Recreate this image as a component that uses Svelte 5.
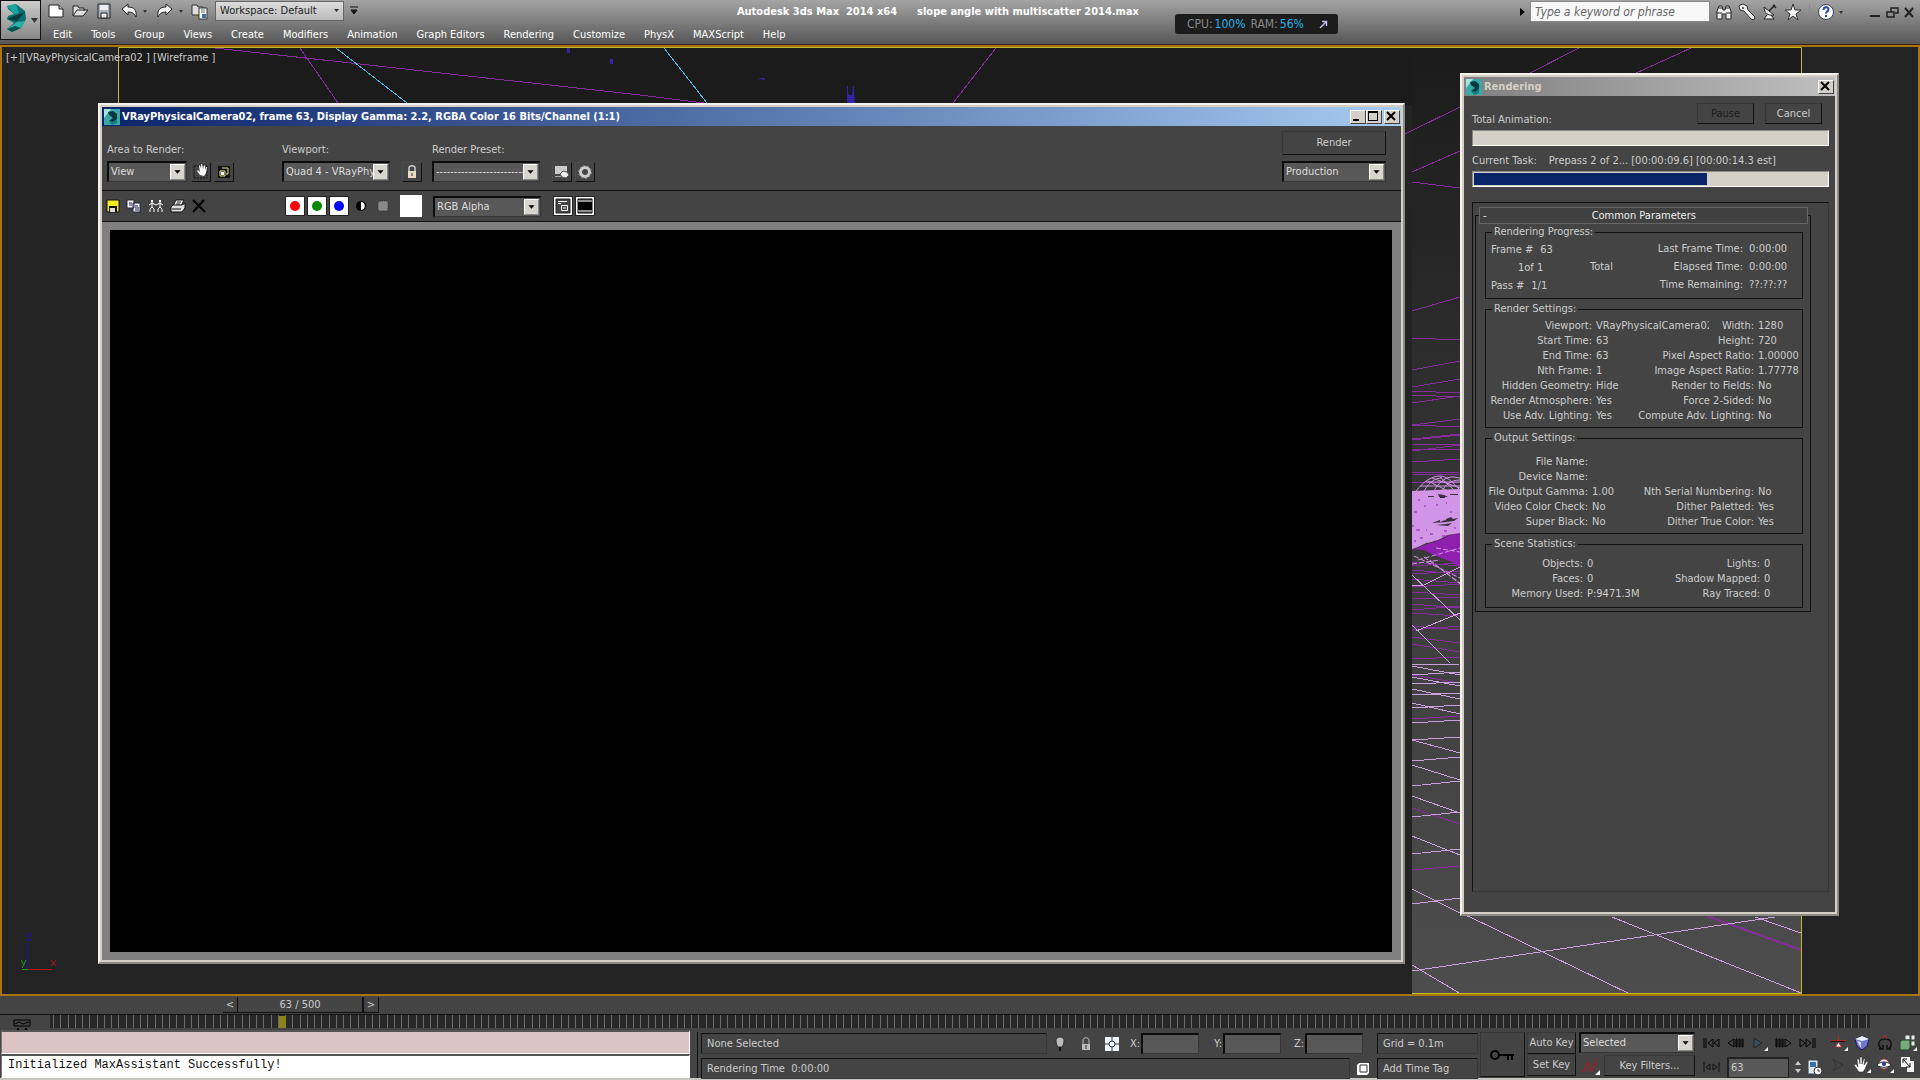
<script lang="ts">
    const menus = ['Edit', 'Tools', 'Group', 'Views', 'Create', 'Modifiers', 'Animation', 'Graph Editors', 'Rendering', 'Customize', 'PhysX', 'MAXScript', 'Help'];

    let frame = 63;
    const frameCount = 500;
    const ticks = Array(frameCount / 2 + 1);
    let taskProgress = 66;

    const progress = [
        ['Last Frame Time:', '0:00:00'],
        ['Elapsed Time:', '0:00:00'],
        ['Time Remaining:', '??:??:??']
    ];

    const groups = [
        {
            name: 'Render Settings:',
            kind: 'settings',
            rows: [
                ['Viewport:', 'VRayPhysicalCamera02', 'Width:', '1280'],
                ['Start Time:', '63', 'Height:', '720'],
                ['End Time:', '63', 'Pixel Aspect Ratio:', '1.00000'],
                ['Nth Frame:', '1', 'Image Aspect Ratio:', '1.77778'],
                ['Hidden Geometry:', 'Hide', 'Render to Fields:', 'No'],
                ['Render Atmosphere:', 'Yes', 'Force 2-Sided:', 'No'],
                ['Use Adv. Lighting:', 'Yes', 'Compute Adv. Lighting:', 'No']
            ]
        },
        {
            name: 'Output Settings:',
            kind: 'output',
            rows: [
                ['File Name:', '', '', ''],
                ['Device Name:', '', '', ''],
                ['File Output Gamma:', '1.00', 'Nth Serial Numbering:', 'No'],
                ['Video Color Check:', 'No', 'Dither Paletted:', 'Yes'],
                ['Super Black:', 'No', 'Dither True Color:', 'Yes']
            ]
        },
        {
            name: 'Scene Statistics:',
            kind: 'stats',
            rows: [
                ['Objects:', '0', 'Lights:', '0'],
                ['Faces:', '0', 'Shadow Mapped:', '0'],
                ['Memory Used:', 'P:9471.3M', 'Ray Traced:', '0']
            ]
        }
    ];

    // wireframe segments between the two windows: [y at left edge, y at right edge]
    const farLines = [
        [311, 297], [338, 340], [370, 361], [387, 379], [391, 393], [395, 397], [403, 396], [425, 419], [425, 427],
        [439, 434], [440, 435], [444, 445], [449, 450], [451, 445], [462, 459], [473, 472], [474, 475], [483, 482],
        [562, 566], [566, 563], [570, 574], [574, 571], [579, 583], [587, 584], [592, 595], [599, 597], [604, 608],
        [610, 606], [613, 616], [626, 630], [630, 626], [637, 643], [644, 652], [659, 657], [675, 683], [719, 716],
        [808, 824], [870, 866]
    ];
    const nearLines = [
        [665, 664], [666, 675], [675, 672], [677, 686], [684, 682], [689, 699], [695, 693], [703, 714], [708, 705],
        [723, 720], [740, 753], [740, 737], [761, 757], [765, 780], [786, 781], [796, 813], [817, 812], [836, 855],
        [854, 849], [904, 898]
    ];
</script>

{#snippet appIcon()}
    <svg class="app-icon" width="16" height="16" viewBox="0 0 16 16">
        <rect width="16" height="16" fill="#39a8a6" />
        <path d="M0 0h7L0 9z" fill="#a9e4df" />
        <path d="M4 3l5-1 4 3v5l-4 3-4-1 4-3-4-3z" fill="#06393f" />
        <path d="M5 12l4 1 4-3v4l-5 2z" fill="#0f7f80" />
    </svg>
{/snippet}

{#snippet combo(id: string, value: string, cls: string)}
    <span class="combo {cls}">
        <select {id} aria-label={id}><option>{value}</option></select>
        <svg class="drop" width="15" height="16" viewBox="0 0 15 16"><path d="M4 6h7L7.500 10z" fill="#000" /></svg>
    </span>
{/snippet}

<div class="app">
    <header>
        <button class="logo" aria-label="Application menu">
            <svg width="38" height="38" viewBox="0 0 38 38">
                <path d="M6 5l9-2 9 7 1 8-5 9-9 4-5-3 7-6-7-4 1-3 6-2-6-5z" fill="#08706f" />
                <path d="M6 5l9-2 3 9-5 1z" fill="#1da39d" />
                <path d="M6 18l7-3 11-4-8 9z" fill="#043c40" />
                <path d="M6 28l10-7 8-1-4 7-9 4z" fill="#2ab0a8" />
                <path d="M6 28l8-3 6 2-9 4z" fill="#075052" />
                <path d="M30 17h7l-3.500 5z" fill="#333" />
            </svg>
        </button>
        <div class="bars">
            <div class="quick">
                <button aria-label="New"><svg width="18" height="16" viewBox="0 0 18 16"><path d="M2 2h10l4 4v8H2z" fill="#fff" stroke="#222" /><path d="M12 2v4h4" fill="#bbb" stroke="#222" /></svg></button>
                <button aria-label="Open"><svg width="18" height="16" viewBox="0 0 18 16"><path d="M2 13V3h5l1 2h5v3M2 13l4-6h11l-5 6z" fill="#ddd" stroke="#222" /></svg></button>
                <button aria-label="Save"><svg width="18" height="16" viewBox="0 0 18 16"><path d="M3 1h12v14H3z" fill="#a8b2bc" stroke="#222" /><path d="M5 2h8v5H5z" fill="#eee" /><path d="M6 10h6v5H6z" fill="#eee" stroke="#222" /></svg></button>
                <button class="pair" aria-label="Undo"><svg width="26" height="16" viewBox="0 0 26 16"><path d="M1 6l6-5v3c6 0 9 3 8 10-2-4-4-5-8-5v3z" fill="#f4f4f4" stroke="#222" /><path d="M22 7h4l-2 3z" fill="#333" /></svg></button>
                <button class="pair" aria-label="Redo"><svg width="26" height="16" viewBox="0 0 26 16"><path d="M15 6L9 1v3C3 4 0 7 1 14c2-4 4-5 8-5v3z" fill="#f4f4f4" stroke="#222" /><path d="M22 7h4l-2 3z" fill="#333" /></svg></button>
                <button aria-label="Project folder"><svg width="18" height="18" viewBox="0 0 18 18"><path d="M1 3h5l1 2h5v8H1z" fill="#ddd" stroke="#333" /><path d="M8 6h8v11H8z" fill="#fff" stroke="#333" /><path d="M10 8h4M10 10h4" stroke="#666" /><path d="M11 12h4v4h-4z" fill="#3c6f9f" /></svg></button>
                <span class="workspace">
                    <select aria-label="Workspace"><option>Workspace: Default</option></select>
                    <svg width="5" height="4" viewBox="0 0 5 4"><path d="M0 0h5L2.500 3z" fill="#333" /></svg>
                </span>
                <svg width="8" height="10" viewBox="0 0 8 10"><path d="M0 1h8M1 4h6L4 8z" fill="#111" stroke="#111" /></svg>
            </div>
            <nav>
                {#each menus as menu}
                    <button>{menu}</button>
                {/each}
            </nav>
        </div>
        <div class="title"><span>Autodesk 3ds Max&nbsp; 2014 x64</span><span>slope angle with multiscatter 2014.max</span></div>
        <div class="meter">
            <span>CPU:</span><b>100%</b><span class="ram">RAM:</span><b>56%</b>
            <svg width="9" height="9" viewBox="0 0 9 9"><path d="M1 8l6-6M3 1.500h4.500V6" fill="none" stroke="#b8b8ee" stroke-width="1.500" /></svg>
        </div>
        <div class="info">
            <svg width="5" height="8" viewBox="0 0 5 8"><path d="M0 0l5 4-5 4z" fill="#000" /></svg>
            <input type="text" placeholder="Type a keyword or phrase" aria-label="Search" />
            <button aria-label="Find"><svg width="18" height="18" viewBox="0 0 18 18"><path d="M2 16V8l2-5h3l1 4h2l1-4h3l2 5v8h-5v-5H7v5z" fill="#eee" stroke="#222" /><path d="M2 10h5M11 10h5M4 5h3M11 5h3" stroke="#222" /></svg></button>
            <button aria-label="Subscription"><svg width="18" height="18" viewBox="0 0 18 18"><path d="M2 2l3-1 4 2 1 4 7 7-1 3-3-1-7-8-4-1-1-4z" fill="#eee" stroke="#333" /><circle cx="5" cy="5" r="1" fill="#333" /></svg></button>
            <button aria-label="Communication"><svg width="18" height="18" viewBox="0 0 18 18"><path d="M3 4c0 6 4 9 10 8zM6 12l-3 4h10l-3-4" fill="#eee" stroke="#222" /><path d="M8 8l6-6M12 2l3 3" stroke="#222" stroke-width="1.500" /></svg></button>
            <button aria-label="Favorites"><svg width="18" height="18" viewBox="0 0 18 18"><path d="M9 1l2 6h6l-5 4 2 6-5-4-5 4 2-6-5-4h6z" fill="#f4f4f4" stroke="#333" /></svg></button>
            <i class="rule"></i>
            <button class="help" aria-label="Help"><svg width="26" height="18" viewBox="0 0 26 18"><circle cx="9" cy="9" r="7.500" fill="#fff" stroke="#345" /><path d="M6.500 7c0-3.500 5-3.500 5-.5 0 2-2.500 2-2.500 4M9 12v2" fill="none" stroke="#2548a8" stroke-width="2" /><path d="M22 8h4l-2 3z" fill="#333" /></svg></button>
            <button class="min" aria-label="Minimize"><svg width="12" height="16" viewBox="0 0 12 16"><path d="M1 12h10" stroke="#222" stroke-width="2" /></svg></button>
            <button aria-label="Restore"><svg width="13" height="16" viewBox="0 0 13 16"><path d="M5 8V4h7v5H9M1 8h7v5H1z" fill="none" stroke="#222" stroke-width="1.500" /></svg></button>
            <button aria-label="Close"><svg width="11" height="16" viewBox="0 0 11 16"><path d="M1 4l8 9M9 4l-8 9" stroke="#222" stroke-width="2" /></svg></button>
        </div>
    </header>

    <main>
        <svg class="scene" viewBox="2 47 1916 947" preserveAspectRatio="none">
            <defs>
                <linearGradient id="ground" x1="0" y1="0" x2="0" y2="1">
                    <stop offset="0" stop-color="#1b1b1b" />
                    <stop offset=".25" stop-color="#282828" />
                    <stop offset=".63" stop-color="#404040" />
                    <stop offset="1" stop-color="#4d4d4d" />
                </linearGradient>
            </defs>
            <rect x="118" y="47" width="1300" height="58" fill="#1b1b1b" />
            <rect x="1412" y="47" width="390" height="947" fill="url(#ground)" />
            <g fill="none" stroke="#862c9c" shape-rendering="crispEdges">
                <path d="M215 48L640 95l64 8M300 48l38 55M996 48l-43 55M1579 48l-51 26M1691 48l-57 26M1405 134l55-27M1412 172l48-21M1412 182l48 6" />
                {#each farLines as [a, b]}
                    <path d="M1412 {a}L1460 {b}" />
                {/each}
                <path d="M1707 916l94 34" stroke-width="2" />
            </g>
            <path d="M336 48l71 55M664 48l43 55" fill="none" stroke="#4fb4e0" shape-rendering="crispEdges" />
            <path d="M567 48h3v5h-3zM610 59h3v5h-3zM758 80l3-2h3l1 2h-2l-1-1zM847 86h1v6l1 3h3l1-9h1v4l1 14h-8z" fill="#3324a4" />
            <path d="M1412 550l10-4 12-4 26-10v36l-8-6-16-6-12-6-12-1z" fill="#8f1fae" />
            <path d="M1412 491l48-2v44l-12 2-10 5-12 3-8 4-6 2z" fill="#d294e6" />
            <path d="M1416 491c8-10 16-15 24-15s14 8 20 14M1424 491c6-10 12-13 18-13M1434 491c4-8 12-15 20-14l6 1M1442 491c3-6 9-11 18-11M1420 486h40M1426 482h34M1432 478l28 10M1440 477l14 13M1428 481l20 10" fill="none" stroke="#d294e6" />
            <path d="M1428 496h6v1h-6zM1438 494l6 1 4 2h-9zM1432 523l8-3v2l5-2 3 2zM1446 519l5-2 2 2 5-1-4 3-8 1zM1450 494h8v1h-8zM1440 497h5v1h-5zM1436 525l10-1 6-1-4 3z" fill="#3a3040" />
            <path d="M1414 545l20-4M1418 560l42-12M1414 556l46 22M1424 557l36 26M1412 564l28-4M1430 560l30 24M1436 548l24 4" fill="none" stroke="#d294e6" stroke-dasharray="5 2" />
            <path d="M1418 500h2M1424 506h2M1414 512h3M1450 512h2M1430 534h3M1442 536h8M1416 530h4M1436 505h2M1412 526h2M1420 538h3M1414 541h2M1426 530h1M1454 528h2M1444 531h3M1446 503h1" stroke="#8f1fae" />
            <g fill="none" stroke="#c9a0dc" shape-rendering="crispEdges">
                {#each nearLines as [a, b]}
                    <path d="M1412 {a}L1460 {b}" />
                {/each}
                <path d="M1412 575l48 45M1412 585h12l36-18M1412 625l38 38M1416 631l44-18" />
                <path d="M1412 889l48 24 10 4 160 77M1412 971l363-54M1412 965l49 29M1612 917l189 76M1755 917l46 16" />
            </g>
            <path d="M118.500 105V47.500H1801.500V993.500H1412" fill="none" stroke="#c4bc1e" />
            <g fill="none" stroke-width="1">
                <path d="M27.500 969v-26M26 934h5l-4 6h5" stroke="#1a10b0" />
                <path d="M28 969.500h24M51 960l5 6M56 960l-5 6" stroke="#b01818" />
                <path d="M22 969.500h6M21 960l3 5M26 960l-4 8" stroke="#18a018" />
            </g>
        </svg>
        <div class="view-label">[+][VRayPhysicalCamera02 ] [Wireframe ]</div>

        <section class="window frame-window">
            <div class="caption">
                {@render appIcon()}
                <h2>VRayPhysicalCamera02, frame 63, Display Gamma: 2.2, RGBA Color 16 Bits/Channel (1:1)</h2>
                <button class="sys" aria-label="Minimize window"><svg width="12" height="11" viewBox="0 0 12 11"><path d="M2 8h6v2H2z" /></svg></button>
                <button class="sys" aria-label="Maximize window"><svg width="12" height="11" viewBox="0 0 12 11"><path d="M1 0h10v10H1zM2 2v7h8V2z" fill-rule="evenodd" /></svg></button>
                <button class="sys close" aria-label="Close window"><svg width="12" height="11" viewBox="0 0 12 11"><path d="M2 1l8 8M10 1L2 9" stroke="#000" stroke-width="2" /></svg></button>
            </div>
            <div class="render-bar">
                <div class="field area">
                    <label for="area">Area to Render:</label>
                    <div class="line">
                        {@render combo('area', 'View', 'w80')}
                        <button class="tool" aria-label="Edit region"><svg width="18" height="18" viewBox="0 0 18 18"><path d="M2 3h13v12H2z" fill="none" stroke="#111" stroke-dasharray="2 1" /><path d="M8 12L5 8l1-1 2 2-1-6 1-1 1 4V1h1l1 5 1-4 1 1v4l1-3h1l-1 6-2 3z" fill="#fff" /></svg></button>
                        <button class="tool" aria-label="Auto region"><svg width="18" height="18" viewBox="0 0 18 18"><path d="M3 3h12v12H3z" fill="#111" /><path d="M7 5h6v6h-2M5 8h5v5H5z" fill="none" stroke="#e8e890" /><path d="M6 9h3v3H6z" fill="#fff" /></svg></button>
                    </div>
                </div>
                <div class="field view">
                    <label for="viewport">Viewport:</label>
                    <div class="line">
                        {@render combo('viewport', 'Quad 4 - VRayPhysicalCamera02', 'w108')}
                        <button class="tool lock" aria-label="Lock viewport"><svg width="18" height="18" viewBox="0 0 18 18"><path d="M6 9V5c0-3 6-3 6 0v4" fill="none" stroke="#ccc" stroke-width="1.500" /><path d="M5 8h8v7H5z" fill="#e8dcc0" /><path d="M9 10v3" stroke="#333" /></svg></button>
                    </div>
                </div>
                <div class="field">
                    <label for="preset">Render Preset:</label>
                    <div class="line">
                        {@render combo('preset', '-------------------------', 'w108')}
                        <button class="tool setup" aria-label="Render setup"><svg width="18" height="18" viewBox="0 0 18 18"><path d="M2 3h12v8H2z" fill="#ccc" /><path d="M2 13h6v1H2z" fill="#aaa" /><path d="M7 11l3-3 4 1 2 3-3 3-4-1z" fill="#eee" stroke="#555" /></svg></button>
                        <button class="tool" aria-label="Environment"><svg width="18" height="18" viewBox="0 0 18 18"><circle cx="9" cy="9" r="4.500" fill="none" stroke="#ccc" stroke-width="3" /><circle cx="9" cy="9" r="6.500" fill="none" stroke="#888" stroke-dasharray="2 2" /></svg></button>
                    </div>
                </div>
                <div class="field go">
                    <button class="flat">Render</button>
                    {@render combo('production', 'Production', 'w104')}
                </div>
            </div>
            <div class="image-bar">
                <div class="icons">
                    <button aria-label="Save image"><svg width="14" height="14" viewBox="0 0 14 14"><path d="M1 1h12v12H1z" fill="#f4ee20" stroke="#111" /><path d="M3 7h8v6H3z" fill="#111" /><path d="M4 9h5v4H4z" fill="#ddd" /></svg></button>
                    <button aria-label="Copy image"><svg width="16" height="14" viewBox="0 0 16 14"><path d="M1 1h7v8H1zM7 4h7v9H7z" fill="#fff" stroke="#224" /><path d="M3 4h3M3 6h3M9 7h3M9 9h4M9 11h4" stroke="#115" /></svg></button>
                    <button aria-label="Clone window"><svg width="16" height="14" viewBox="0 0 16 14"><path d="M3 1h2v2H3zM11 1h2v2h-2z" fill="#fff" /><path d="M4 3v5M1 6l3-2 4 2 4-2 3 2M2 13v-3l2-2 2 2v3M12 3v5M10 13v-3l2-2 2 2v3" fill="none" stroke="#fff" /></svg></button>
                    <button aria-label="Print image"><svg width="16" height="14" viewBox="0 0 16 14"><path d="M6 1h8l-3 6H3z" fill="#fff" stroke="#111" /><path d="M3 6h9l3-2v5l-3 4H1V8z" fill="#ddd" stroke="#111" /><path d="M7 3h4M6 5h4M2 10h9" stroke="#111" /></svg></button>
                    <button aria-label="Clear"><svg width="14" height="14" viewBox="0 0 14 14"><path d="M1 1l12 12M12 1L1 13" stroke="#000" stroke-width="2" /></svg></button>
                </div>
                <div class="channels">
                    <button class="on" aria-label="Red channel"><i class="dot red"></i></button>
                    <button class="on" aria-label="Green channel"><i class="dot green"></i></button>
                    <button class="on" aria-label="Blue channel"><i class="dot blue"></i></button>
                    <button aria-label="Alpha channel"><svg width="12" height="12" viewBox="0 0 12 12"><circle cx="6" cy="6" r="5" fill="#000" /><path d="M6 2c5 0 5 8 0 8z" fill="#fff" /></svg></button>
                    <button aria-label="Monochrome"><svg width="12" height="12" viewBox="0 0 12 12"><rect x="1" y="1" width="10" height="10" rx="2" fill="#888" stroke="#333" stroke-dasharray="1 1" /></svg></button>
                    <button class="swatch" aria-label="Pixel color"></button>
                </div>
                {@render combo('channel', 'RGB Alpha', 'w108')}
                <div class="channels overlay">
                    <button class="on" aria-label="Toggle overlay"><svg width="16" height="16" viewBox="0 0 16 16"><path d="M1 1h14v14H1z" fill="#444" stroke="#222" /><path d="M3 3.500h9M3 5.500h3M6.500 7.500h6v5h-6zM8 10h3" fill="none" stroke="#fff" /></svg></button>
                    <button class="on" aria-label="Toggle UI"><svg width="16" height="16" viewBox="0 0 16 16"><path d="M1 1h14v14H1z" fill="#555" stroke="#000" /><path d="M1 4h14v8H1z" fill="#000" /><path d="M1 3h14M1 13h14" stroke="#ccc" /></svg></button>
                </div>
            </div>
            <div class="canvas"></div>
        </section>

        <section class="window dialog">
            <div class="caption idle">
                {@render appIcon()}
                <h2>Rendering</h2>
                <button class="sys close" aria-label="Close dialog"><svg width="12" height="11" viewBox="0 0 12 11"><path d="M2 1l8 8M10 1L2 9" stroke="#000" stroke-width="2" /></svg></button>
            </div>
            <div class="dialog-body">
                <div class="head">
                    <span>Total Animation:</span>
                    <button class="flat" disabled>Pause</button>
                    <button class="flat">Cancel</button>
                </div>
                <div class="bar"></div>
                <div class="task"><span>Current Task:</span><span>Prepass 2 of 2... [00:00:09.6] [00:00:14.3 est]</span></div>
                <div class="bar"><div class="done" style="width: {taskProgress}%"></div></div>
                <div class="panel">
                    <div class="rollout">
                        <button class="rollout-head"><span>-</span>Common Parameters</button>
                        <fieldset class="progress">
                            <legend>Rendering Progress:</legend>
                            <div class="col">
                                <div class="pair"><span>Frame #</span><span>63</span></div>
                                <div class="count">1of 1</div>
                                <div class="pair"><span>Pass #</span><span>1/1</span></div>
                            </div>
                            <div class="total">Total</div>
                            <div class="times">
                                {#each progress as [label, value]}
                                    <span class="label">{label}</span><span>{value}</span>
                                {/each}
                            </div>
                        </fieldset>
                        {#each groups as group}
                            <fieldset class="grid {group.kind}">
                                <legend>{group.name}</legend>
                                {#each group.rows as [left, value, right, rightValue]}
                                    <span class="label">{left}</span><span class="value">{value}</span>
                                    <span class="label">{right}</span><span>{rightValue}</span>
                                {/each}
                            </fieldset>
                        {/each}
                    </div>
                </div>
            </div>
        </section>
    </main>

    <div class="slider">
        <button aria-label="Previous frame">&lt;</button>
        <button class="thumb">{frame} / {frameCount}</button>
        <button aria-label="Next frame">&gt;</button>
    </div>

    <div class="track">
        <button aria-label="Mini curve editor"><svg width="20" height="12" viewBox="0 0 20 12"><path d="M2 1h16v6H2zM3 5l4-2 4 2 6-2M5 11l1-2 1 2zM13 11l1-2 1 2z" fill="none" stroke="#000" /></svg></button>
        <div class="ticks">
            {#each ticks as _}<i></i>{/each}
            <b class="key" style="left: {(frame - 1) / frameCount * 100}%"></b>
        </div>
    </div>

    <footer>
        <div class="listener">
            <input class="macro" aria-label="Macro recorder" />
            <input aria-label="Listener" value="Initialized MaxAssistant Successfully!" />
        </div>
        <div class="status">
            <div class="status-row">
                <div class="box grow">None Selected</div>
                <button class="prompt" aria-label="Adaptive degradation"><svg width="12" height="18" viewBox="0 0 12 18"><path d="M6 2c6 0 4 7 2 10H4C2 9 0 2 6 2z" fill="#bbb" stroke="#333" /><path d="M5 12h2v4H5z" fill="#111" /></svg></button>
                <button class="prompt" aria-label="Lock selection"><svg width="12" height="16" viewBox="0 0 12 16"><path d="M3 8V4c0-3 6-3 6 0v4" fill="none" stroke="#bbb" /><path d="M2 8h8v6H2z" fill="#bbb" /><path d="M6 9v4" stroke="#333" /></svg></button>
                <button class="prompt" aria-label="Absolute mode"><svg width="14" height="14" viewBox="0 0 14 14"><path d="M0 0h14v14H0z" fill="#eef4fa" /><circle cx="7" cy="7" r="3" fill="none" stroke="#234" /><path d="M7 0v4M7 10v4M0 7h4M10 7h4" stroke="#234" /></svg></button>
                {#each ['X', 'Y', 'Z'] as axis}
                    <label class="axis">{axis}:<input /></label>
                {/each}
                <div class="box tag">Grid = 0.1m</div>
            </div>
            <div class="status-row">
                <div class="box grow">Rendering Time&nbsp; 0:00:00</div>
                <button class="cube" aria-label="Isolate"><svg width="14" height="14" viewBox="0 0 14 14"><path d="M3 1h10v10l-2 2H1V3z" fill="#fff" /><path d="M4 3h7v7H4z" fill="none" stroke="#333" /></svg></button>
                <button class="box tag">Add Time Tag</button>
            </div>
        </div>
        <button class="flat big-key" aria-label="Set keys"><svg width="26" height="14" viewBox="0 0 26 14"><circle cx="5" cy="7" r="4" fill="none" stroke="#000" stroke-width="2" /><path d="M9 7h15M18 7v5M22 7v5" stroke="#000" stroke-width="2" /></svg></button>
        <div class="stack keys">
            <button class="flat">Auto Key</button>
            <button class="flat">Set Key</button>
        </div>
        <div class="stack filters">
            {@render combo('key set', 'Selected', 'w116')}
            <div class="line">
                <button class="curve" aria-label="New key tangents"><svg width="20" height="18" viewBox="0 0 20 18"><path d="M1 14c5 2 3-8 6-8s1 8 4 8 2-12 5-12" fill="none" stroke="#a02028" stroke-width="1.500" /><path d="M19 13v5h-5z" fill="#fff" /></svg></button>
                <button class="flat">Key Filters...</button>
            </div>
        </div>
        <div class="stack playback">
            <div class="line">
                <button aria-label="Go to start"><svg width="17" height="14" viewBox="0 0 17 14"><path d="M1 2v10M3 2v10M10 3L5 7l5 4zM16 3l-5 4 5 4z" fill="none" stroke="#000" /></svg></button>
                <button aria-label="Step back"><svg width="17" height="14" viewBox="0 0 17 14"><path d="M7 3L1 7l6 4zM9 3h1v8H9zM12 3h1v8h-1zM15 3h1v8h-1z" fill="none" stroke="#000" /></svg></button>
                <button aria-label="Play"><svg width="17" height="18" viewBox="0 0 17 18"><path d="M3 4v10M3 4l8 5-8 5" fill="#3c4c58" stroke="#182430" /><path d="M17 13v4h-4z" fill="#fff" /></svg></button>
                <button aria-label="Step forward"><svg width="17" height="14" viewBox="0 0 17 14"><path d="M10 3l6 4-6 4zM1 3h1v8H1zM4 3h1v8H4zM7 3h1v8H7z" fill="none" stroke="#000" /></svg></button>
                <button aria-label="Go to end"><svg width="17" height="14" viewBox="0 0 17 14"><path d="M16 2v10M14 2v10M7 3l5 4-5 4zM1 3l5 4-5 4z" fill="none" stroke="#000" /></svg></button>
            </div>
            <div class="line">
                <button aria-label="Key mode"><svg width="17" height="12" viewBox="0 0 17 12"><path d="M1 1v10M7 3L3 6l4 3zM10 3l4 3-4 3zM16 1v10" fill="none" stroke="#111" /></svg></button>
                <input class="frame" aria-label="Current frame" value={frame} />
                <svg class="spin" width="12" height="18" viewBox="0 0 12 18"><path d="M3 7h6L6 3zM3 11h6l-3 4z" fill="#ccc" /></svg>
                <button aria-label="Time configuration"><svg width="16" height="17" viewBox="0 0 16 17"><path d="M1 1h10v14H1z" fill="#dde8f0" stroke="#345" /><path d="M3 3h6v5H3z" fill="#3c70a4" /><circle cx="11" cy="12" r="4" fill="#fff" stroke="#333" /><path d="M11 10v2h2" fill="none" stroke="#333" /></svg></button>
            </div>
        </div>
        <div class="nav-tools">
            <button aria-label="Dolly camera"><svg width="18" height="18" viewBox="0 0 18 18"><path d="M1 6.500h15M8.500 1v8" stroke="#b02828" /><path d="M1 7.500h14" stroke="#111" /><path d="M8.500 8l3 5h-6z" fill="#fff" stroke="#a33" /><path d="M18 13v4h-4z" fill="#fff" /></svg></button>
            <button aria-label="Perspective"><svg width="18" height="18" viewBox="0 0 18 18"><path d="M2 5l7-3 7 3-2 7-5 4-5-4z" fill="#7078d0" stroke="#181860" /><path d="M2 5l7 2 7-2-7-3z" fill="#eef" /><path d="M4 7l4 1v6z" fill="#dde" /></svg></button>
            <button aria-label="Roll camera"><svg width="18" height="18" viewBox="0 0 18 18"><path d="M6 15C1 12 2 5 9 5s8 7 3 10M3 15h4v-4M15 15h-4v-4" fill="none" stroke="#111" stroke-width="1.500" /><path d="M7 5l2-4 2 4" fill="none" stroke="#b02828" /></svg></button>
            <button aria-label="Zoom extents all"><svg width="18" height="18" viewBox="0 0 18 18"><path d="M6 1h5v5H6zM12 1h4v5h-4zM12 7h4v5h-4z" fill="#e8eee8" stroke="#444" /><path d="M1 8l2-2h8v8l-2 2H1z" fill="#78a878" stroke="#243" /><path d="M18 13v4h-4z" fill="#fff" /></svg></button>
            <button aria-label="Field of view"><svg width="18" height="18" viewBox="0 0 18 18"><path d="M3 3l10 6-10 6M3 3l3 6-3 6" fill="none" stroke="#333" /></svg></button>
            <button aria-label="Truck camera"><svg width="18" height="18" viewBox="0 0 18 18"><path d="M6 16L1 9l2-1 2 3-1-8 2 0 1 5V1h2v7l2-6 1 1-1 6 3-4 1 1-3 7-2 3z" fill="#fff" stroke="#222" stroke-width=".5" /><path d="M18 13v4h-4z" fill="#fff" /></svg></button>
            <button aria-label="Orbit camera"><svg width="18" height="18" viewBox="0 0 18 18"><circle cx="8" cy="8" r="5" fill="#eee" stroke="#a33" /><path d="M1 9c3-4 11-4 14 0-3 3-11 3-14 0z" fill="#fff" stroke="#234" /><circle cx="8" cy="8" r="2" fill="#28308c" /><path d="M18 13v4h-4z" fill="#fff" /></svg></button>
            <button aria-label="Maximize viewport"><svg width="18" height="18" viewBox="0 0 18 18"><path d="M2 1h9v4h4v11H8v-5H2z" fill="#f4f4f4" /><path d="M4 3l7 8M4 7V3h4M11 7v4H7" fill="none" stroke="#111" /></svg></button>
        </div>
    </footer>
</div>

<style>
    :global(body) {
        margin: 0;
        background: #444;
    }

    * {
        box-sizing: border-box;
    }

    .app {
        display: flex;
        flex-direction: column;
        min-height: 100vh;
        font: 11px/14px "DejaVu Sans Condensed", "Noto Sans", sans-serif;
        color: #ccc;
        background: #444;
    }

    button, input, select {
        font: inherit;
        color: inherit;
        margin: 0;
        padding: 0;
        border: 0;
        background: none;
        appearance: none;
        border-radius: 0;
        min-width: 0;
    }

    svg {
        display: block;
        flex: none;
    }

    .line {
        display: flex;
        align-items: center;
    }

    /* top bar */
    header {
        display: flex;
        height: 45px;
        background: linear-gradient(#a4a4a4, #565656);
        border-bottom: 1px solid #3c2410;
        color: #fff;
    }

    .logo {
        width: 41px;
        height: 40px;
        border: 1px solid #111;
        background: linear-gradient(#ccc, #888);
    }

    .bars {
        flex: 1;
        padding-left: 6px;
    }

    .quick {
        display: flex;
        align-items: center;
        gap: 6px;
        height: 22px;
    }

    .quick .pair {
        padding: 0 2px;
    }

    .workspace {
        display: flex;
        align-items: center;
        width: 129px;
        height: 20px;
        padding: 0 4px;
        color: #222;
        border: 1px solid #666;
        background: linear-gradient(#ddd, #bbb);
    }

    .workspace select {
        flex: 1;
    }

    nav {
        display: flex;
        gap: 19px;
        padding: 6px 0 0 6px;
    }

    nav button {
        white-space: nowrap;
    }

    .title {
        display: flex;
        gap: 20px;
        padding-top: 5px;
        margin-left: -50px;
        font-weight: bold;
        white-space: nowrap;
    }

    .meter {
        display: flex;
        align-items: center;
        width: 163px;
        height: 20px;
        margin: 14px 0 0 36px;
        padding: 0 10px 0 12px;
        border-radius: 3px;
        background: #1c1c1c;
        color: #888;
        font-size: 12px;
    }

    .meter b {
        padding-left: 2px;
        font-weight: normal;
        color: #28b4e8;
    }

    .meter .ram {
        padding-left: 5px;
    }

    .meter svg {
        margin-left: auto;
    }

    .info {
        display: flex;
        align-items: center;
        gap: 5px;
        width: 400px;
        height: 23px;
        margin-left: 182px;
        padding-right: 5px;
    }

    .info input {
        width: 180px;
        height: 21px;
        padding: 0 4px;
        border: 1px solid #888;
        background: #f8f8f8;
        color: #333;
        font-size: 12px;
    }

    .info input::placeholder {
        color: #666;
        font-style: italic;
    }

    .info .min {
        margin-left: auto;
    }

    .rule {
        width: 1px;
        height: 16px;
        margin: 0 2px;
        background: #8a8a8a;
    }

    /* viewport */
    main {
        flex: 1;
        position: relative;
        min-height: 700px;
        border: 2px solid #a8740c;
        background: #232323;
    }

    .scene {
        position: absolute;
        inset: 0;
        width: 100%;
        height: 100%;
    }

    .view-label {
        position: absolute;
        left: 4px;
        top: 4px;
    }

    .window {
        position: absolute;
        display: flex;
        flex-direction: column;
        border: 2px solid #d4d0c8;
        border-color: #f4f2ec #8c8a84 #8c8a84 #f4f2ec;
        background: #444;
        box-shadow: inset 0 0 0 2px #d4d0c8;
        padding: 2px;
    }

    .frame-window {
        left: 96px;
        right: 513px;
        top: 56px;
        bottom: 30px;
    }

    .dialog {
        width: 379px;
        right: 79px;
        top: 26px;
        bottom: 78px;
    }

    .caption {
        display: flex;
        align-items: center;
        height: 19px;
        padding: 0 1px 0 2px;
        color: #fff;
        background: linear-gradient(90deg, #0a246a, #a6caf0);
    }

    .idle {
        color: #d4d0c8;
        background: linear-gradient(90deg, #808080, #c0c0c0);
    }

    h2 {
        flex: 1;
        margin: 0 0 0 2px;
        font-size: 11px;
        line-height: 14px;
        white-space: nowrap;
    }

    .sys {
        width: 16px;
        height: 14px;
        border: 1px solid;
        border-color: #fff #404040 #404040 #fff;
        background: #d4d0c8;
    }

    .sys.close {
        margin-left: 2px;
    }

    .render-bar {
        display: flex;
        height: 65px;
        padding: 0 15px 0 5px;
        border-bottom: 1px solid #111;
    }

    .field {
        display: flex;
        flex-direction: column;
        gap: 4px;
        padding-top: 17px;
    }

    .area {
        width: 175px;
    }

    .view {
        width: 150px;
    }

    .go {
        margin-left: auto;
        padding-top: 5px;
        gap: 6px;
    }

    .combo {
        display: grid;
        align-items: center;
        height: 21px;
        border: 1px solid #333;
        border-width: 2px 1px 1px 2px;
        border-color: #0c0c0c #363636 #363636 #0c0c0c;
        background: #585858;
        color: #ddd;
    }

    .combo select {
        grid-area: 1 / 1;
        width: 100%;
        height: 18px;
        padding: 0 16px 0 2px;
        overflow: hidden;
    }

    .drop {
        grid-area: 1 / 1;
        justify-self: end;
        margin-right: 1px;
        border: 1px solid;
        border-color: #fff #888 #888 #fff;
        background: #d8d5ce;
        pointer-events: none;
    }

    .w80 { width: 80px; }
    .w104 { width: 104px; }
    .w108 { width: 108px; }
    .w116 { width: 116px; }

    .tool {
        width: 20px;
        height: 20px;
        margin-left: 3px;
        border: 1px solid #4c4c4c;
        border-right-color: #111;
        border-bottom-color: #111;
    }

    .tool.lock, .tool.setup {
        margin-left: 12px;
    }

    .w80 + .tool {
        margin-left: 4px;
    }

    .flat {
        border: 1px solid #383838;
        border-right-color: #111;
        border-bottom-color: #111;
    }

    .flat:disabled {
        color: #1c1c1c;
    }

    .go .flat {
        height: 24px;
    }

    .image-bar {
        display: flex;
        align-items: center;
        height: 31px;
        padding-left: 4px;
        border-bottom: 1px solid #111;
    }

    .icons {
        display: flex;
        gap: 6px;
        width: 179px;
    }

    .channels {
        display: flex;
        align-items: center;
        gap: 2px;
        width: 148px;
    }

    .channels button {
        display: grid;
        place-items: center;
        width: 20px;
        height: 20px;
    }

    .channels .on {
        border: 1px solid #222;
        background: #fff;
    }

    .channels .swatch {
        width: 22px;
        height: 22px;
        margin-left: 5px;
        background: #fff;
    }

    .overlay {
        padding-left: 12px;
    }

    .dot {
        width: 10px;
        height: 10px;
        border-radius: 5px;
    }

    .red { background: #f00; }
    .green { background: #080; }
    .blue { background: #00f; }

    .canvas {
        flex: 1;
        border: 8px solid #808080;
        border-right-width: 9px;
        background: #000;
    }

    /* render progress dialog */
    .dialog-body {
        flex: 1;
        display: flex;
        flex-direction: column;
        padding: 7px 6px 20px 8px;
    }

    .head {
        display: flex;
        align-items: start;
        gap: 11px;
        height: 27px;
        padding-right: 7px;
    }

    .head span {
        flex: 1;
        padding-top: 10px;
    }

    .head .flat {
        width: 57px;
        height: 21px;
    }

    .bar {
        height: 16px;
        padding: 1px;
        border: 1px solid;
        border-color: #888 #fff #fff #888;
        background: #d4d0c8;
    }

    .done {
        height: 100%;
        background: #0a246a;
    }

    .task {
        display: flex;
        gap: 12px;
        height: 25px;
        padding-top: 8px;
    }

    .panel {
        flex: 1;
        margin-top: 15px;
        padding: 4px 17px 0 2px;
        border: 1px solid #383838;
        border-top-color: #111;
        border-left-color: #111;
    }

    .rollout {
        display: flex;
        flex-direction: column;
        gap: 3px;
        margin-top: 8px;
        padding: 0 7px 3px 9px;
        border: 1px solid #111;
    }

    .rollout-head {
        height: 17px;
        margin: -9px -5px -2px -6px;
        padding-right: 6px;
        border: 1px solid #666;
        background: #404040;
        color: #eee;
    }

    .rollout-head span {
        float: left;
        padding-left: 3px;
    }

    fieldset {
        min-width: 0;
        margin: 0;
        border: 1px solid #111;
        white-space: nowrap;
    }

    legend {
        margin-left: 1px;
        padding: 0 2px;
        line-height: 14px;
    }

    .progress {
        display: flex;
        height: 74px;
        padding: 1px 3px 0 5px;
        line-height: 18px;
    }

    .col {
        width: 99px;
        padding-top: 1px;
    }

    .col .pair {
        display: flex;
        gap: 7px;
    }

    .count {
        padding-left: 27px;
    }

    .total {
        padding-top: 18px;
    }

    .times {
        flex: 1;
        display: grid;
        grid-template-columns: 1fr 50px;
        column-gap: 6px;
        align-content: start;
    }

    .label {
        justify-self: end;
    }

    .grid {
        display: grid;
        grid-auto-rows: 15px;
        align-content: start;
        column-gap: 4px;
        line-height: 15px;
    }

    .settings {
        grid-template-columns: 101px 36px 1fr 43px;
        height: 126px;
        padding: 2px 1px 0 5px;
    }

    .settings .value {
        width: 113px;
        overflow: hidden;
    }

    .output {
        grid-template-columns: 97px 36px 1fr 43px;
        height: 103px;
        padding: 9px 1px 0 5px;
    }

    .stats {
        grid-template-columns: 92px 56px 1fr 37px;
        height: 71px;
        padding: 5px 1px 0 5px;
    }

    /* time slider and track bar */
    .slider {
        display: flex;
        height: 19px;
        padding: 1px 0 1px 223px;
        border-bottom: 1px solid #111;
    }

    .slider button {
        width: 15px;
        border-right: 1px solid #111;
        border-bottom: 1px solid #111;
    }

    .slider .thumb {
        width: 126px;
        border-right-width: 2px;
    }

    .track {
        display: flex;
        height: 13px;
        padding-right: 50px;
    }

    .track button {
        width: 50px;
        padding: 4px 0 0 12px;
    }

    .ticks {
        flex: 1;
        display: flex;
        justify-content: space-between;
        position: relative;
        padding: 0 1px 0 3px;
        background: #282828;
    }

    .ticks i {
        width: 1px;
        background: #6c6c6c;
    }

    .key {
        position: absolute;
        top: 1px;
        bottom: 0;
        width: 7px;
        margin-left: 3px;
        background: #8c8418;
    }

    /* status area */
    footer {
        display: flex;
        height: 52px;
        padding: 4px 3px 0 0;
        border-bottom: 2px solid #c8c6c2;
    }

    .listener {
        display: flex;
        flex-direction: column;
        flex: 0 0 36%;
        margin-top: -2px;
        padding-left: 1px;
    }

    .listener input {
        height: 24px;
        padding: 0 6px 3px;
        border: 1px solid #fff;
        border-top: 2px solid #555;
        border-left-color: #777;
        background: #fff;
        color: #111;
        font: 12px "Liberation Mono", monospace;
    }

    .listener .macro {
        background: #dcc4c4;
    }

    .status {
        flex: 1;
        display: flex;
        flex-direction: column;
        gap: 4px;
        margin-left: 7px;
        padding: 1px 0 0 3px;
        border-left: 1px solid #111;
    }

    .status-row {
        display: flex;
        align-items: center;
        height: 21px;
    }

    .box {
        height: 21px;
        padding: 3px 5px;
        border: 1px solid #383838;
        border-top-color: #111;
        border-left-color: #111;
        text-align: left;
        white-space: nowrap;
    }

    .grow {
        flex: 1;
    }

    .prompt {
        display: grid;
        place-items: center;
        width: 26px;
    }

    .axis {
        display: flex;
        align-items: center;
        justify-content: end;
        width: 82px;
    }

    .prompt + .axis {
        width: 74px;
    }

    .axis input {
        width: 58px;
        height: 21px;
        margin-left: 1px;
        border: 1px solid #363636;
        border-width: 2px 1px 1px 2px;
        border-top-color: #0c0c0c;
        border-left-color: #0c0c0c;
        background: #585858;
    }

    .tag {
        width: 101px;
        margin-left: 14px;
    }

    .cube {
        width: 20px;
        padding-left: 6px;
    }

    .cube + .tag {
        margin-left: 7px;
    }

    .big-key {
        display: grid;
        place-items: center;
        width: 45px;
        height: 45px;
        margin-left: 2px;
    }

    .stack {
        display: flex;
        flex-direction: column;
        gap: 2px;
    }

    .keys {
        width: 49px;
        margin: 0 3px 0 2px;
        gap: 0;
    }

    .keys .flat {
        height: 22px;
        white-space: nowrap;
    }

    .filters .flat {
        width: 91px;
        height: 21px;
    }

    .curve {
        width: 25px;
        padding-left: 2px;
    }

    .playback {
        width: 135px;
        padding-left: 8px;
    }

    .playback .line {
        height: 22px;
        gap: 7px;
    }

    .frame {
        width: 62px;
        height: 21px;
        padding: 0 2px;
        border: 1px solid #222;
        border-width: 2px 1px 1px 2px;
        background: #585858;
    }

    .spin {
        margin: 0 -4px;
    }

    .nav-tools {
        display: grid;
        grid-template-columns: repeat(4, 18px);
        gap: 4px 5px;
        align-content: start;
        padding-top: 2px;
    }
</style>
